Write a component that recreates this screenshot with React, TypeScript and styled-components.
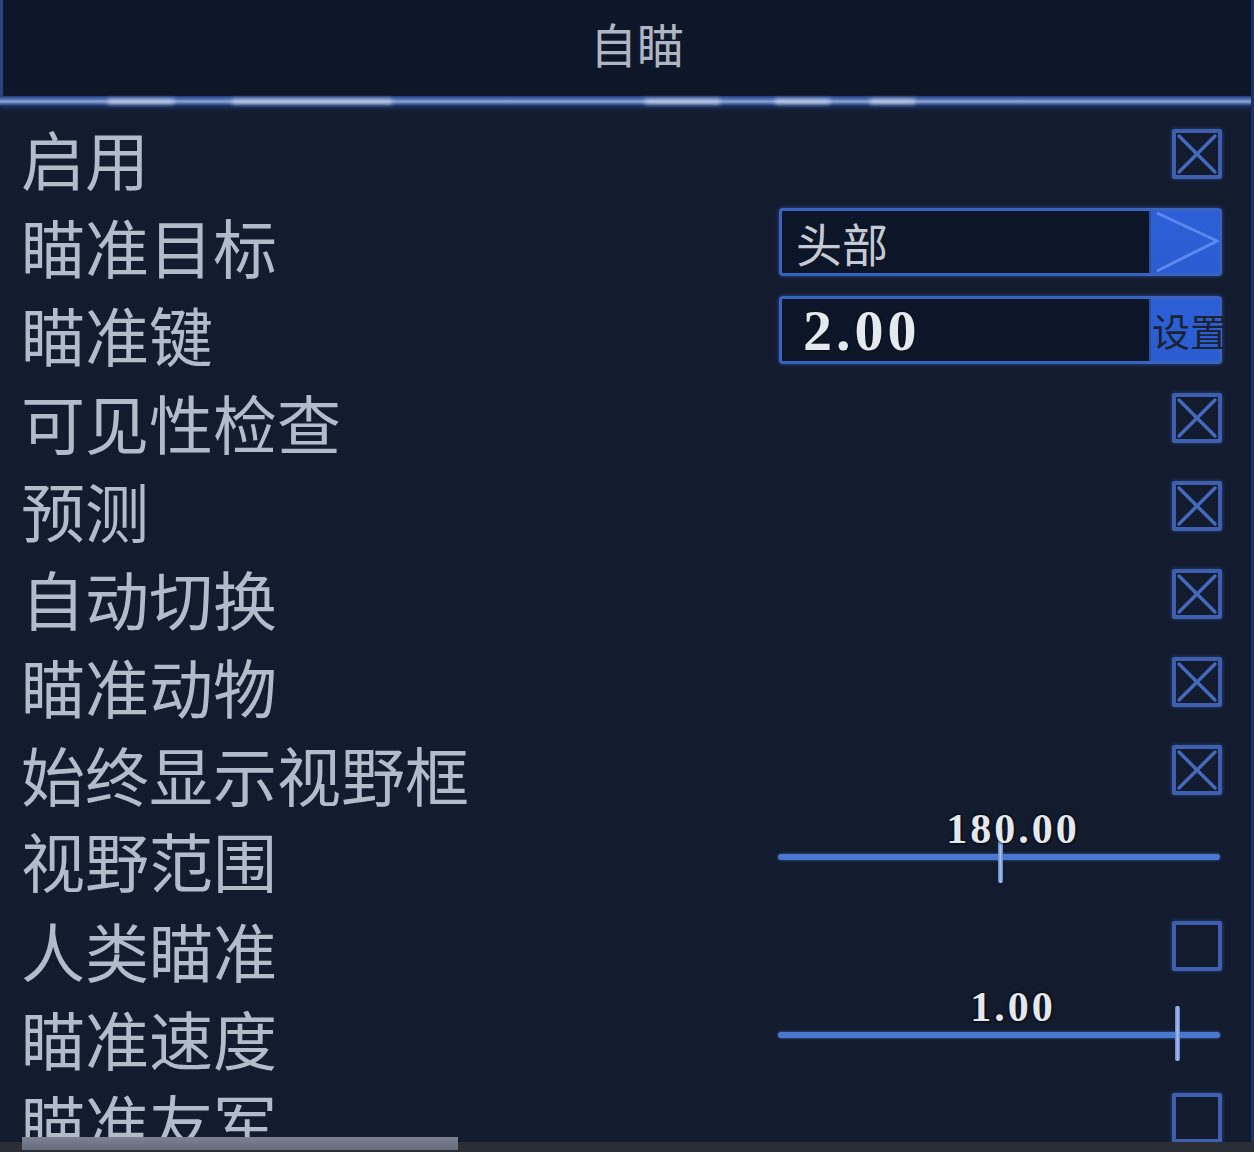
import React from 'react';
import styled, { createGlobalStyle } from 'styled-components';

const GlobalStyle = createGlobalStyle`
    html, body {
        margin: 0;
        padding: 0;
        background: #131b2e;
        overflow: hidden;
    }
    body {
        font-family: "Noto Sans CJK SC", "Noto Sans", sans-serif;
    }
`;

type Row =
    | { kind: 'check'; label: string; checked: boolean; height: number }
    | { kind: 'select'; label: string; value: string; height: number }
    | { kind: 'key'; label: string; value: string; height: number }
    | { kind: 'slider'; label: string; value: string; percent: number; height: number };

const rows: Row[] = [
    { kind: 'check', label: '启用', checked: true, height: 88 },
    { kind: 'select', label: '瞄准目标', value: '头部', height: 88 },
    { kind: 'key', label: '瞄准键', value: '2.00', height: 88 },
    { kind: 'check', label: '可见性检查', checked: true, height: 88 },
    { kind: 'check', label: '预测', checked: true, height: 88 },
    { kind: 'check', label: '自动切换', checked: true, height: 88 },
    { kind: 'check', label: '瞄准动物', checked: true, height: 88 },
    { kind: 'check', label: '始终显示视野框', checked: true, height: 88 },
    { kind: 'slider', label: '视野范围', value: '180.00', percent: 50.3, height: 84 },
    { kind: 'check', label: '人类瞄准', checked: false, height: 96 },
    { kind: 'slider', label: '瞄准速度', value: '1.00', percent: 90.3, height: 80 },
    { kind: 'check', label: '瞄准友军', checked: false, height: 88 },
];

const Checkbox = ({ checked }: { checked: boolean }) => (
    <CheckBoxFrame>
        {checked && (
            <svg width="42" height="42" viewBox="0 0 42 42">
                <path d="M3 3 L39 39 M39 3 L3 39" stroke="#4468ba" strokeWidth="3.5" strokeLinecap="round" />
            </svg>
        )}
    </CheckBoxFrame>
);

const Select = ({ value }: { value: string }) => (
    <Field>
        <FieldText>{value}</FieldText>
        <FieldButton>
            <svg width="68" height="62" viewBox="0 0 68 62" preserveAspectRatio="none">
                <path d="M6 2 L66 30 L6 60" stroke="#5b88ee" strokeWidth="3" fill="none" />
            </svg>
        </FieldButton>
    </Field>
);

const KeyInput = ({ value }: { value: string }) => (
    <Field>
        <KeyText>{value}</KeyText>
        <FieldButton>
            <SetLabel>设置</SetLabel>
        </FieldButton>
    </Field>
);

const Slider = ({ value, percent }: { value: string; percent: number }) => (
    <SliderBox>
        <SliderValue>{value}</SliderValue>
        <TrackArea>
            <Track />
            <Thumb style={{ left: `${percent}%` }} />
        </TrackArea>
    </SliderBox>
);

const App = () => {
    return (
        <>
            <GlobalStyle />
            <Window>
                <Header>
                    <Title>自瞄</Title>
                </Header>
                <Divider>
                    <Ghost style={{ left: 108, width: 66 }} />
                    <Ghost style={{ left: 232, width: 160 }} />
                    <Ghost style={{ left: 645, width: 75 }} />
                    <Ghost style={{ left: 775, width: 55 }} />
                    <Ghost style={{ left: 870, width: 45 }} />
                </Divider>
                <List>
                    {rows.map((row) => (
                        <SettingRow key={row.label} $height={row.height}>
                            <Label>{row.label}</Label>
                            {row.kind === 'check' && <Checkbox checked={row.checked} />}
                            {row.kind === 'select' && <Select value={row.value} />}
                            {row.kind === 'key' && <KeyInput value={row.value} />}
                            {row.kind === 'slider' && <Slider value={row.value} percent={row.percent} />}
                        </SettingRow>
                    ))}
                </List>
            </Window>
            <ScrollBar>
                <ScrollThumb />
            </ScrollBar>
        </>
    );
};

const Window = styled.div`
    height: 1142px;
    display: flex;
    flex-direction: column;
    overflow: hidden;
    background: #131b2e;
    border-right: 3px solid #1d3263;
    box-sizing: border-box;
`;

const Header = styled.div`
    height: 96px;
    flex-shrink: 0;
    display: flex;
    align-items: center;
    justify-content: center;
    padding-left: 20px;
    background: #0e1629;
    border-left: 3px solid #26447f;
    box-sizing: border-box;
`;

const Title = styled.div`
    font-size: 47px;
    line-height: 1;
    color: #aeb6c3;
    margin-top: -12px;
`;

const Divider = styled.div`
    position: relative;
    height: 10px;
    flex-shrink: 0;
    background: linear-gradient(to bottom, #1f3b78 0%, #5a78b8 35%, #8ea3cf 55%, #4564a8 80%, #18294d 100%);
    box-shadow: 0 2px 4px rgba(40, 80, 160, 0.5);
`;

const Ghost = styled.span`
    position: absolute;
    top: 3px;
    height: 5px;
    background: #d6deee;
    opacity: 0.7;
    filter: blur(2px);
`;

const List = styled.div`
    display: flex;
    flex-direction: column;
    padding: 4px 29px 0 21px;
`;

const SettingRow = styled.div<{ $height: number }>`
    height: ${(p) => p.$height}px;
    flex-shrink: 0;
    display: flex;
    align-items: center;
    justify-content: space-between;
`;

const Label = styled.div`
    font-size: 64px;
    line-height: 1;
    color: #b2bbc9;
    white-space: nowrap;
    padding-top: 6px;
`;

const CheckBoxFrame = styled.div`
    width: 50px;
    height: 50px;
    box-sizing: border-box;
    border: 4px solid #3d5fae;
    border-radius: 2px;
    box-shadow: 0 0 4px rgba(60, 100, 190, 0.6);
    display: flex;
    align-items: center;
    justify-content: center;
`;

const Field = styled.div`
    width: 443px;
    height: 68px;
    box-sizing: border-box;
    display: flex;
    border: 3px solid #3a63c0;
    border-radius: 4px;
    background: #0d1528;
    box-shadow: 0 0 4px rgba(58, 99, 192, 0.7);
`;

const FieldText = styled.div`
    flex: 1;
    display: flex;
    align-items: center;
    padding-left: 14px;
    font-size: 46px;
    color: #c3cad4;
    border-right: 2px solid #2e4f9a;
`;

const KeyText = styled.div`
    flex: 1;
    display: flex;
    align-items: center;
    padding-left: 21px;
    font-family: "Liberation Serif", "DejaVu Serif", serif;
    font-weight: bold;
    font-size: 58px;
    letter-spacing: 4px;
    color: #e4e9ef;
    text-shadow: 0 0 2px #000;
    border-right: 2px solid #2e4f9a;
`;

const FieldButton = styled.div`
    width: 68px;
    flex-shrink: 0;
    display: flex;
    align-items: center;
    background: linear-gradient(to bottom, #2d5fd8, #2b5cd0);
`;

const SetLabel = styled.span`
    font-size: 38px;
    line-height: 1;
    color: #1b2232;
    white-space: nowrap;
    margin-left: 1px;
`;

const SliderBox = styled.div`
    width: 442px;
    height: 76px;
    margin-right: 2px;
    display: flex;
    flex-direction: column;
`;

const SliderValue = styled.div`
    position: relative;
    z-index: 2;
    height: 34px;
    text-align: center;
    padding-left: 28px;
    font-family: "Liberation Serif", "DejaVu Serif", serif;
    font-weight: bold;
    font-size: 42px;
    line-height: 22px;
    letter-spacing: 3px;
    color: #e3e8ef;
    text-shadow: 0 0 2px #000, 0 0 3px #000;
`;

const TrackArea = styled.div`
    position: relative;
    height: 42px;
`;

const Track = styled.div`
    position: absolute;
    left: 0;
    right: 0;
    top: 2px;
    height: 6px;
    border-radius: 3px;
    background: #4a77d0;
    box-shadow: 0 0 3px rgba(74, 119, 208, 0.8);
`;

const Thumb = styled.div`
    position: absolute;
    top: -24px;
    width: 5px;
    height: 55px;
    margin-left: -2px;
    background: linear-gradient(to right, #5f82cf, #a9bde6, #5f82cf);
    border-radius: 2px;
    z-index: 1;
`;

const ScrollBar = styled.div`
    position: relative;
    height: 10px;
    background: #2b2e35;
`;

const ScrollThumb = styled.div`
    position: absolute;
    left: 22px;
    top: -5px;
    width: 436px;
    height: 13px;
    background: linear-gradient(to bottom, #7c8292, #666c7b);
`;

export default App;
